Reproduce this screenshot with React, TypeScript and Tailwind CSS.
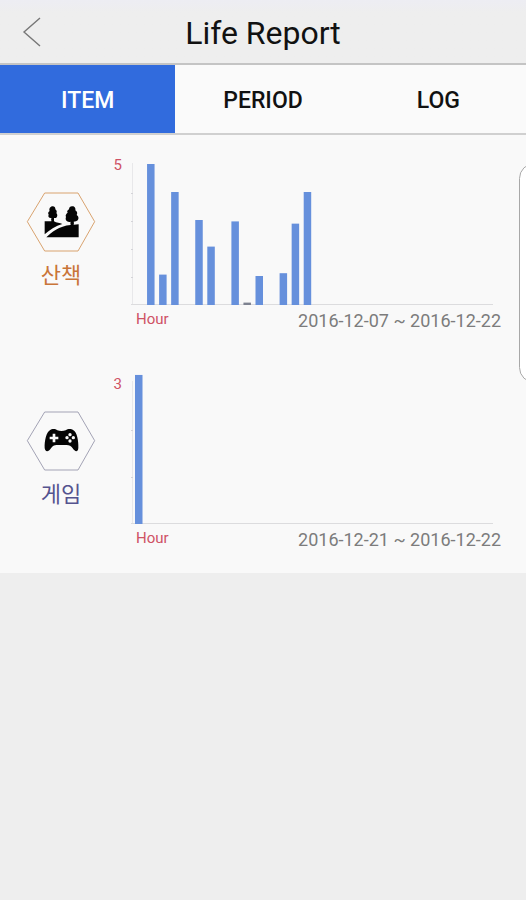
import { useState } from "react";
import type { ReactNode } from "react";

type Report = {
  id: string;
  name: string;
  nameClass: string;
  outline: string;
  top: number;
  unit: number;
  values: number[];
  period: string;
  glyph: ReactNode;
};

const ParkGlyph = () => (
  <g fill="#050505">
    <path d="M103 125H123V118H131V125C138 130 149 130 156 133C136 139 117 151 103 164Z" />
    <path d="M108 173C123 158 146 139 181 136V128H190V135L205 134V173Z" />
    <path d="M127 80C133 80 136 85 135 89C140 92 140 98 138 100C143 105 141 113 136 115H131V120H123V115C116 116 112 110 115 105C112 101 114 96 118 94C115 88 120 80 127 80Z" />
    <path d="M185 80C192 79 197 86 195 92C201 95 202 102 199 106C207 111 206 122 197 125L190 126V134H181V126C171 129 163 121 167 112C164 107 168 102 172 99C168 94 174 91 176 89C176 84 180 80 185 80Z" />
  </g>
);

const GamepadGlyph = () => (
  <g>
    <path
      fill="#050505"
      d="M120 94C125 89 136 90 141 95C148 98 159 98 166 95C172 90 183 90 188 94C200 99 205 127 204 148C203 161 194 160 187 149C182 142 177 139 169 139H139C131 139 127 142 122 149C114 161 104 160 103 148C102 127 108 99 120 94Z"
    />
    <path fill="#fafafa" d="M127 105H135V114H144V122H135V131H127V122H118V114H127Z" />
    <g fill="#fafafa">
      <circle cx="179" cy="108" r="5" />
      <circle cx="189" cy="117" r="5" />
      <circle cx="179" cy="127" r="5" />
      <circle cx="170" cy="117" r="5" />
    </g>
  </g>
);

const reports: Report[] = [
  {
    id: "walk",
    name: "산책",
    nameClass: "text-[#c97539]",
    outline: "#d9a36f",
    top: 5,
    unit: 28,
    values: [0, 5, 1.05, 4, 0, 3, 2.05, 0, 2.95, 0.05, 1, 0, 1.1, 2.87, 4],
    period: "2016-12-07 ~ 2016-12-22",
    glyph: <ParkGlyph />,
  },
  {
    id: "game",
    name: "게임",
    nameClass: "text-[#55538f]",
    outline: "#a3a3b5",
    top: 3,
    unit: 47,
    values: [3.15],
    period: "2016-12-21 ~ 2016-12-22",
    glyph: <GamepadGlyph />,
  },
];

const tabs = ["ITEM", "PERIOD", "LOG"];

function Chart({ report }: { report: Report }) {
  const base = 150;
  const ticks = Array.from({ length: report.top - 1 }, (_, i) => base - (i + 1) * report.unit);
  return (
    <svg
      className="block h-[151px] w-full"
      viewBox="0 0 362 151"
      preserveAspectRatio="none"
      role="img"
      aria-label={`${report.name} ${report.period}`}
    >
      <rect x="1" y={base - report.top * report.unit - 2} width="1" height={report.top * report.unit + 2} fill="#e8e8ea" />
      {ticks.map((y) => (
        <rect key={y} x="0" y={y} width="2" height="1" fill="#d4d4d8" />
      ))}
      <rect x="0" y={base - 1} width="362" height="1" fill="#dcdcde" />
      {report.values.map((v, i) =>
        v > 0 ? (
          <rect
            key={i}
            x={4 + i * 12.05}
            y={base - 1 - Math.max(v * report.unit, 1)}
            width="7.5"
            height={Math.max(v * report.unit, 1) + 1}
            fill={v < 0.1 ? "#7d8290" : "#6690dc"}
          />
        ) : null,
      )}
    </svg>
  );
}

function ReportRow({ report }: { report: Report }) {
  return (
    <li className="flex h-[219px] items-start pt-5 pr-[25px] pl-[26px]">
      <div className="flex w-[70px] shrink-0 flex-col items-center pt-9">
        <svg className="h-[61px] w-[70px]" viewBox="47 34 210 183" aria-hidden="true">
          <polygon
            points="51,126 103,40 203,40 253,126 203,214 103,214"
            fill="none"
            stroke={report.outline}
            strokeWidth="3"
          />
          {report.glyph}
        </svg>
        <h2 className={`mt-2 text-[22px] leading-8 ${report.nameClass}`}>{report.name}</h2>
      </div>
      <span className="w-[26px] shrink-0 text-right text-[15px] leading-5 text-[#cf5265]">{report.top}</span>
      <div className="ml-[9px] min-w-0 flex-1">
        <div className="pr-2">
          <Chart report={report} />
        </div>
        <div className="flex items-start justify-between pt-[3px] pl-[5px] whitespace-nowrap">
          <span className="text-[15px] leading-5 text-[#cf5265]">Hour</span>
          <span className="text-[18px] leading-6 text-[#7c7c7c]">{report.period}</span>
        </div>
      </div>
    </li>
  );
}

export default function App() {
  const [active, setActive] = useState("ITEM");
  return (
    <div className="relative min-h-screen overflow-hidden bg-[#eeeeee] font-['Roboto','Noto_Sans_CJK_KR',sans-serif]">
      <header className="grid h-[65px] grid-cols-[64px_1fr_64px] items-center border-b-2 border-[#c4c4c4] bg-linear-to-b from-[#ededf3] to-[#eeeeee] to-20%">
        <button type="button" aria-label="Back" className="flex h-full items-center justify-center">
          <svg className="h-8 w-5" viewBox="0 0 20 32" fill="none" stroke="#777" strokeWidth="1.4" aria-hidden="true">
            <path d="M18 2L2 16L18 30" />
          </svg>
        </button>
        <h1 className="pt-0.5 text-center text-[32px] leading-10 text-[#111]">Life Report</h1>
      </header>
      <nav className="grid h-[70px] grid-cols-3 border-b-2 border-[#d0d0d0] bg-[#fafafa]">
        {tabs.map((tab) => (
          <button
            key={tab}
            type="button"
            aria-pressed={active === tab}
            onClick={() => setActive(tab)}
            className={`pt-1 text-[23px] font-medium ${active === tab ? "bg-[#316bdd] text-white" : "text-[#111]"}`}
          >
            {tab}
          </button>
        ))}
      </nav>
      <main className="relative">
        <ul className="bg-[#f9f9f9]">
          {reports.map((report) => (
            <ReportRow key={report.id} report={report} />
          ))}
        </ul>
        <div className="absolute top-7 -right-6 h-[220px] w-[31px] rounded-[20px] border border-[#a8a8a8] bg-white" />
      </main>
    </div>
  );
}
